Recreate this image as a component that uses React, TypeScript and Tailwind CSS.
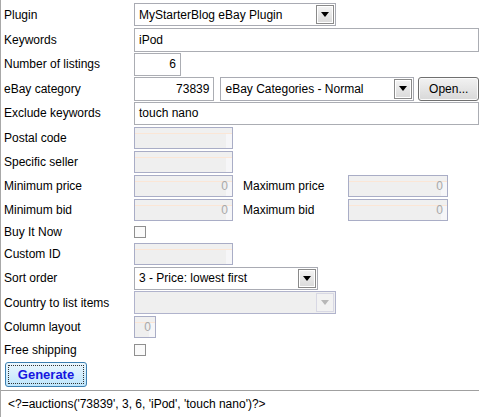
import React from "react";

const font = { fontFamily: '"Liberation Sans", Arial, sans-serif' };

const Arrow: React.FC<{ disabled?: boolean }> = ({ disabled }) => (
  <div
    className={`flex h-full w-[18px] items-center justify-center border ${
      disabled
        ? "border-[#d8d8e4] bg-[#f2f2f2]"
        : "border-[#8a8a8a] bg-gradient-to-b from-[#f4f4f4] to-[#dadada] shadow-[inset_0_0_0_1px_#ffffff]"
    }`}
  >
    <svg width="8" height="5" viewBox="0 0 8 5">
      <path d="M0 0 L8 0 L4 5 Z" fill={disabled ? "#b8b8b8" : "#000"} />
    </svg>
  </div>
);

const Select: React.FC<{ value?: string; w: string; disabled?: boolean; h?: string }> = ({
  value,
  w,
  disabled,
  h = "h-[23px]",
}) => (
  <div
    className={`${w} ${h} flex items-stretch border p-[1px] ${
      disabled ? "border-[#b0b3cc] bg-[#efefef]" : "border-[#a9abb3] bg-white"
    }`}
  >
    <div className="flex flex-1 items-center truncate pl-[3px] text-black">{value}</div>
    <Arrow disabled={disabled} />
  </div>
);

const Input: React.FC<{ value?: string; w: string; right?: boolean; h?: string }> = ({
  value,
  w,
  right,
  h = "h-[24px]",
}) => (
  <div
    className={`${w} ${h} flex items-center border border-[#abadb3] bg-white px-[4px] text-black ${
      right ? "justify-end" : ""
    }`}
  >
    {value}
  </div>
);

const Disabled: React.FC<{ value?: string; w: string }> = ({ value, w }) => (
  <div
    className={`${w} flex h-[22px] items-center justify-end border border-[#a9adc6] bg-[#efefef] pr-[4px] text-[#a8a8a8] shadow-[inset_0_5px_0_#f0f0f0,inset_0_6px_0_#fbe6d6,inset_-6px_0_0_#f6f6f8]`}
  >
    {value}
  </div>
);

const Check = () => <div className="h-[12px] w-[12px] border border-[#8f8f8f] bg-[#fafafa]" />;

const Row: React.FC<{ label: string; h: string; children?: React.ReactNode }> = ({
  label,
  h,
  children,
}) => (
  <div className={`flex ${h} items-center`}>
    <div className="w-[133px] shrink-0 pl-[3px] text-black">{label}</div>
    {children}
  </div>
);

export default function App() {
  return (
    <div
      className="relative h-[417px] w-[479px] overflow-hidden border-l border-[#a8a8a8] bg-white text-[12px] leading-none"
      style={font}
    >
      <div className="flex flex-col pt-[2px]">
        <Row label="Plugin" h="h-[25px]">
          <Select value="MyStarterBlog eBay Plugin" w="w-[202px]" />
        </Row>
        <Row label="Keywords" h="h-[25px]">
          <Input value="iPod" w="w-[352px]" />
        </Row>
        <Row label="Number of listings" h="h-[24px]">
          <Input value="6" w="w-[47px]" right h="h-[23px]" />
        </Row>
        <Row label="eBay category" h="h-[25px]">
          <Input value="73839" w="w-[81px]" right />
          <div className="ml-[6px]">
            <Select value="eBay Categories - Normal" w="w-[194px]" h="h-[24px]" />
          </div>
          <div className="ml-[4px] flex h-[24px] w-[61px] items-center justify-center rounded-[3px] border border-[#707070] bg-gradient-to-b from-[#f2f2f2] to-[#d8d8d8] text-black shadow-[inset_0_0_0_1px_#fbfbfb]">
            Open...
          </div>
        </Row>
        <Row label="Exclude keywords" h="h-[24px]">
          <Input value="touch nano" w="w-[352px]" h="h-[23px]" />
        </Row>
        <Row label="Postal code" h="h-[25px]">
          <Disabled w="w-[99px]" />
        </Row>
        <Row label="Specific seller" h="h-[24px]">
          <Disabled w="w-[99px]" />
        </Row>
        <Row label="Minimum price" h="h-[24px]">
          <Disabled value="0" w="w-[99px]" />
          <div className="w-[115px] pl-[10px] text-black">Maximum price</div>
          <Disabled value="0" w="w-[100px]" />
        </Row>
        <Row label="Minimum bid" h="h-[24px]">
          <Disabled value="0" w="w-[99px]" />
          <div className="w-[115px] pl-[10px] text-black">Maximum bid</div>
          <Disabled value="0" w="w-[100px]" />
        </Row>
        <Row label="Buy It Now" h="h-[20px]">
          <Check />
        </Row>
        <Row label="Custom ID" h="h-[24px]">
          <Disabled w="w-[99px]" />
        </Row>
        <Row label="Sort order" h="h-[24px]">
          <Select value="3 - Price: lowest first" w="w-[184px]" />
        </Row>
        <Row label="Country to list items" h="h-[25px]">
          <Select w="w-[202px]" disabled />
        </Row>
        <Row label="Column layout" h="h-[24px]">
          <Disabled value="0" w="w-[22px]" />
        </Row>
        <Row label="Free shipping" h="h-[22px]">
          <Check />
        </Row>
      </div>
      <div className="mt-[1px] pl-[4px]">
        <div className="flex h-[25px] w-[82px] items-center justify-center rounded-[3px] border border-[#3c7fb1] bg-gradient-to-b from-[#eaf6fd] to-[#bee6fd] p-[2px]">
          <div className="flex h-full w-full items-center justify-center border border-dotted border-[#333] text-[13px] font-bold text-[#1515e0]">
            Generate
          </div>
        </div>
      </div>
      <div className="mt-[3px] border-t border-[#a0a0a0] pl-[7px] pt-[7px] text-black">
        {"<?=auctions('73839', 3, 6, 'iPod', 'touch nano')?>"}
      </div>
    </div>
  );
}
